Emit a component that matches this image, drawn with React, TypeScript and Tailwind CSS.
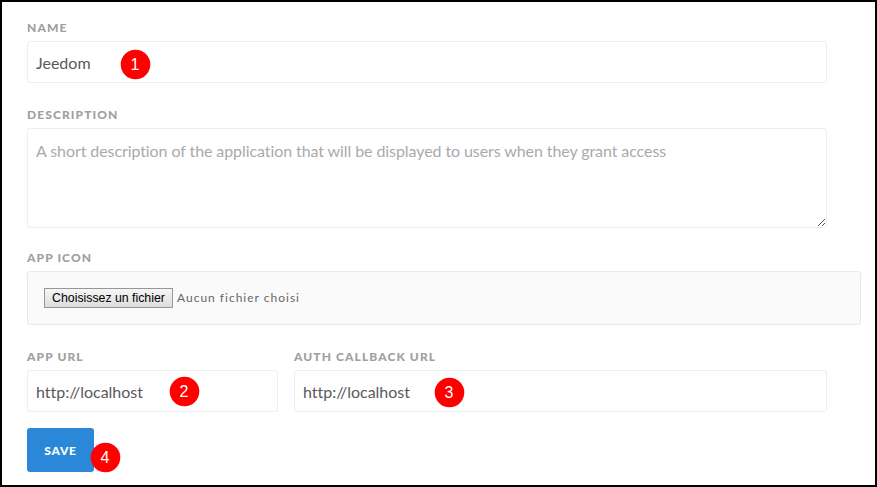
import type { ReactNode } from "react";

function Label({ children }: { children: ReactNode }) {
  return (
    <div className="mb-1 h-[18px] whitespace-nowrap text-[12px] leading-[18px] font-black tracking-[1.1px] text-[#a0a0a0]">
      {children}
    </div>
  );
}

function Badge({ n, className }: { n: number; className: string }) {
  return (
    <span
      className={`absolute flex size-[31px] items-center justify-center pr-px font-['Liberation_Sans',sans-serif] text-[16px] leading-none text-white ${className}`}
    >
      <svg className="absolute inset-0" width="31" height="31" viewBox="0 0 31 31">
        <circle cx="15.5" cy="15.5" r="14.8" fill="#ff0000" />
      </svg>
      <span className="relative">{n}</span>
    </span>
  );
}

function TextField({ label, value, className, children }: { label: string; value: ReactNode; className: string; children: ReactNode }) {
  return (
    <div className={className}>
      <Label>{label}</Label>
      <div className="relative flex h-[42px] items-center rounded-[3px] border border-[#eeeeee] bg-white px-2 pt-[2px] text-[16px] text-[#5a5a5a] [font-variant-ligatures:none]">
        {value}
        {children}
      </div>
    </div>
  );
}

export default function App() {
  return (
    <div className="h-[487px] w-[877px] overflow-hidden border-2 border-black bg-white pt-[17px] pl-[25px] font-['Lato',sans-serif]">
      <TextField label="NAME" value="Jeedom" className="w-[800px]">
        <Badge n={1} className="top-[7px] left-[92px]" />
      </TextField>

      <div className="mt-[23px] w-[800px]">
        <Label>DESCRIPTION</Label>
        <div className="relative h-[100px] rounded-[3px] border border-[#eeeeee] px-2 pt-[10px] text-[16px] leading-6 tracking-[-0.085px] text-[#aaaaaa] [font-variant-ligatures:none]">
          A short description of the application that will be displayed to users when they grant access
          <svg className="absolute right-0 bottom-0" width="9" height="9" viewBox="0 0 9 9" shapeRendering="crispEdges" fill="#555555">
            {[0, 1, 2, 3, 4, 5, 6].map((i) => (
              <rect key={i} x={1 + i} y={7 - i} width="1" height="1" />
            ))}
            {[0, 1, 2].map((i) => (
              <rect key={i} x={5 + i} y={7 - i} width="1" height="1" />
            ))}
          </svg>
        </div>
      </div>

      <div className="mt-[21px] w-[834px]">
        <Label>APP ICON</Label>
        <div className="flex h-[54px] items-center rounded-[3px] border border-[#e9e9e9] bg-[#fafafa] pl-4">
          <button className="h-5 w-[129px] border border-[#979797] bg-linear-to-b from-[#f6f6f6] to-[#dddddd] font-['Liberation_Sans',sans-serif] text-[12.3px] leading-[18px] whitespace-nowrap text-black">
            Choisissez un fichier
          </button>
          <span className="ml-1 text-[12px] tracking-[1px] text-[#666666]">Aucun fichier choisi</span>
        </div>
      </div>

      <div className="mt-[23px] flex gap-4">
        <TextField label="APP URL" value="http://localhost" className="w-[251px]">
          <Badge n={2} className="top-[5px] left-[141px]" />
        </TextField>
        <TextField label="AUTH CALLBACK URL" value="http://localhost" className="w-[533px]">
          <Badge n={3} className="top-[6px] left-[139px]" />
        </TextField>
      </div>

      <button className="relative mt-4 flex h-11 w-[67px] items-center justify-center rounded-[3px] bg-[#2b88d9] pt-px text-[12px] font-black tracking-[0.7px] text-white">
        SAVE
        <Badge n={4} className="top-[14px] left-[63px] font-normal tracking-normal" />
      </button>
    </div>
  );
}
